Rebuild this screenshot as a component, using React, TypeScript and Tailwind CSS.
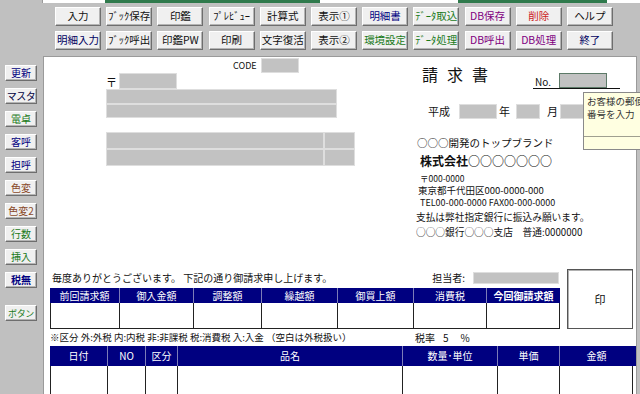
import React from "react";

const FONT = "font-['Noto_Sans_CJK_JP','Noto_Sans',sans-serif]";

type BtnDef = { label: string; color: string };

const topRow1: BtnDef[] = [
  { label: "入力", color: "text-[#111111]" },
  { label: "ﾌﾞｯｸ保存", color: "text-[#111111]" },
  { label: "印鑑", color: "text-[#111111]" },
  { label: "ﾌﾟﾚﾋﾞｭｰ", color: "text-[#111111]" },
  { label: "計算式", color: "text-[#111111]" },
  { label: "表示①", color: "text-[#111111]" },
  { label: "明細書", color: "text-[#000080]" },
  { label: "ﾃﾞｰﾀ取込", color: "text-[#1a7a1a]" },
  { label: "DB保存", color: "text-[#800080]" },
  { label: "削除", color: "text-[#cc2222]" },
  { label: "ヘルプ", color: "text-[#111111]" },
];

const topRow2: BtnDef[] = [
  { label: "明細入力", color: "text-[#000060]" },
  { label: "ﾌﾞｯｸ呼出", color: "text-[#111111]" },
  { label: "印鑑PW", color: "text-[#111111]" },
  { label: "印刷", color: "text-[#111111]" },
  { label: "文字復活", color: "text-[#111111]" },
  { label: "表示②", color: "text-[#111111]" },
  { label: "環境設定", color: "text-[#1a7a1a]" },
  { label: "ﾃﾞｰﾀ処理", color: "text-[#1a7a1a]" },
  { label: "DB呼出", color: "text-[#800080]" },
  { label: "DB処理", color: "text-[#800080]" },
  { label: "終了", color: "text-[#000060]" },
];

const sideBtns: BtnDef[] = [
  { label: "更新", color: "text-[#000080]" },
  { label: "マスタ", color: "text-[#000040] text-[9px] tracking-[-0.5px]" },
  { label: "電卓", color: "text-[#1a7a1a]" },
  { label: "客呼", color: "text-[#000080]" },
  { label: "担呼", color: "text-[#000080]" },
  { label: "色変", color: "text-[#8a4a2a]" },
  { label: "色変2", color: "text-[#8a4a2a]" },
  { label: "行数", color: "text-[#1a7a1a]" },
  { label: "挿入", color: "text-[#1a7a1a]" },
  { label: "税無", color: "text-[#000080] font-bold" },
];

const summaryCols = [
  { label: "前回請求額", w: 69 },
  { label: "御入金額", w: 74 },
  { label: "調整額", w: 68 },
  { label: "繰越額", w: 76 },
  { label: "御買上額", w: 76 },
  { label: "消費税", w: 73 },
  { label: "今回御請求額", w: 74, bold: true },
];

const detailCols = [
  { label: "日付", w: 57 },
  { label: "NO", w: 38 },
  { label: "区分", w: 32 },
  { label: "品名", w: 225 },
  { label: "数量･単位", w: 95 },
  { label: "単価", w: 62 },
  { label: "金額", w: 74 },
];

const Btn = ({ label, color, className = "" }: BtnDef & { className?: string }) => (
  <div
    className={`flex items-center justify-center bg-[#f0f0f0] border border-t-white border-l-white border-r-[#6e6e6e] border-b-[#6e6e6e] shadow-[inset_-1px_-1px_0_#b4b4b4] leading-none whitespace-nowrap ${className} ${color}`}
  >
    {label}
  </div>
);

const Cell = ({ className = "" }: { className?: string }) => (
  <div className={`bg-[#c2c2c2] border border-[#dedede] ${className}`} />
);

export default function App() {
  return (
    <div className={`relative w-[640px] h-[394px] overflow-hidden bg-[#c0c0c0] text-[#111111] ${FONT}`}>
      {/* sheet strip on top */}
      <div className="flex h-[3px]">
        <div className="w-[42px] bg-[#c0c0c0]" />
        <div className="w-[63px] bg-white border-l border-[#9a9a9a]" />
        <div className="w-[215px] bg-[#2f7a4c]" />
        <div className="w-[138px] bg-white" />
        <div className="w-[149px] bg-[#2f7a4c]" />
        <div className="flex-1 bg-white" />
      </div>

      {/* toolbar */}
      <div className="h-[53px] pt-[4px] pl-[55px] flex flex-col gap-[5px]">
        {[topRow1, topRow2].map((row, i) => (
          <div key={i} className="flex gap-[5.2px]">
            {row.map((b) => (
              <Btn key={b.label} {...b} className="w-[46px] h-[19px] text-[10.5px]" />
            ))}
          </div>
        ))}
      </div>

      <div className="flex h-[338px]">
        {/* side buttons */}
        <div className="w-[43px] pt-[9px] pl-[5px] flex flex-col gap-[7px]">
          {sideBtns.map((b) => (
            <Btn key={b.label} {...b} className="w-[32px] h-[16px] text-[10px]" />
          ))}
          <Btn label="ボタン" color="text-[#1a7a1a] text-[9px] tracking-[-0.3px]" className="w-[32px] h-[16px] mt-[10px]" />
        </div>

        {/* sheet */}
        <div className="w-[594px] bg-white border-l border-t border-r border-[#9a9a9a] flex flex-col">
          <div className="h-[212px] flex">
            {/* left column */}
            <div className="ml-[62px] w-[249px] flex flex-col">
              <div className="mt-[1px] h-[15px] flex items-center pl-[127px]">
                <span className="w-[28px] text-[9px] leading-none">CODE</span>
                <Cell className="w-[38px] h-[15px]" />
              </div>
              <div className="h-[16px] flex items-end">
                <span className="w-[13px] text-[11px] leading-[13px]">〒</span>
                <Cell className="w-[58px] h-[16px]" />
              </div>
              <Cell className="w-[231px] h-[15px]" />
              <Cell className="w-[231px] h-[14px]" />
              <div className="mt-[14px] flex">
                <Cell className="w-[218px] h-[17px]" />
                <Cell className="w-[31px] h-[17px]" />
              </div>
              <div className="flex">
                <Cell className="w-[218px] h-[17px]" />
                <Cell className="w-[31px] h-[17px]" />
              </div>
            </div>

            {/* right column */}
            <div className="ml-[61px] w-[220px] flex flex-col">
              <div className="h-[32px] flex items-end">
                <div className="w-[117px] self-start mt-[7px] pl-[6px] text-[16px] leading-[20px] tracking-[9px] whitespace-nowrap">
                  請求書
                </div>
                <div className="w-[87px] h-[16px] border-b border-[#111111] flex items-end">
                  <span className="w-[26px] pl-[2px] text-[10px] leading-[12px]">No.</span>
                  <div className="w-[48px] h-[15px] bg-[#c2c2c2] border border-[#5d7a68]" />
                </div>
              </div>
              <div className="mt-[15px] h-[15px] flex items-center text-[11px] leading-none">
                <span className="w-[43px] pl-[12px]">平成</span>
                <Cell className="w-[38px] h-[15px]" />
                <span className="w-[19px] pl-[2px]">年</span>
                <Cell className="w-[24px] h-[15px]" />
                <span className="w-[20px] pl-[7px]">月</span>
                <Cell className="w-[24px] h-[15px]" />
              </div>
              <div className="mt-[17px] h-[14px] pl-[1px] text-[10.5px] leading-[14px] whitespace-nowrap">
                ○○○開発のトップブランド
              </div>
              <div className="h-[22px] pl-[4px] text-[12px] leading-[22px] font-bold whitespace-nowrap">
                株式会社○○○○○○○
              </div>
              <div className="h-[12px] pl-[4px] text-[8.5px] leading-[12px] whitespace-nowrap">〒000-0000</div>
              <div className="h-[13px] pl-[2px] text-[9.5px] leading-[13px] whitespace-nowrap">
                東京都千代田区000-0000-000
              </div>
              <div className="h-[12px] pl-[4px] text-[9px] leading-[12px] whitespace-nowrap">
                TEL00-000-0000 FAX00-000-0000
              </div>
              <div className="h-[17px] text-[9.7px] leading-[17px] whitespace-nowrap">
                支払は弊社指定銀行に振込み願います。
              </div>
              <div className="h-[13px] text-[9.7px] leading-[13px] whitespace-nowrap">
                ○○○銀行○○○支店　普通:0000000
              </div>
            </div>
          </div>

          {/* summary */}
          <div className="flex pl-[6px]">
            <div className="w-[510px] flex flex-col">
              <div className="h-[19px] flex items-center pb-[2px]">
                <span className="pl-[2px] text-[10px] leading-none whitespace-nowrap">
                  毎度ありがとうございます。 下記の通り御請求申し上げます。
                </span>
                <span className="ml-auto text-[10px] leading-none">担当者:</span>
                <div className="ml-[8px] mr-[1px] w-[86px] h-[12px] bg-[#c2c2c2] border border-[#dedede]" />
              </div>
              <div className="h-[15px] flex bg-[#000080] text-white text-[10px] leading-none">
                {summaryCols.map((c, i) => (
                  <div
                    key={c.label}
                    style={{ width: c.w }}
                    className={`flex items-center justify-center ${i > 0 ? "border-l border-[#7c7cb8]" : ""} ${c.bold ? "font-bold" : ""}`}
                  >
                    {c.label}
                  </div>
                ))}
              </div>
              <div className="h-[26px] flex border-b border-[#222222]">
                {summaryCols.map((c, i) => (
                  <div
                    key={c.label}
                    style={{ width: c.w }}
                    className={`border-l border-[#222222] ${i === summaryCols.length - 1 ? "border-r" : ""}`}
                  />
                ))}
              </div>
            </div>
            <div className="ml-[7px] w-[66px] h-[60px] border border-[#555555] shadow-[inset_1px_1px_0_#b0b0b0] flex items-center justify-center text-[11px]">
              印
            </div>
          </div>

          <div className="h-[17px] flex items-center pl-[6px] text-[9.5px] leading-none whitespace-nowrap">
            <span className="w-[365px]">※区分 外:外税 内:内税 非:非課税 税:消費税 入:入金 （空白は外税扱い）</span>
            <span className="text-[10px]">税率</span>
            <span className="ml-[8px] text-[10px]">5</span>
            <span className="ml-[12px] text-[10px]">%</span>
          </div>

          {/* detail table */}
          <div className="ml-[6px] flex flex-col flex-1">
            <div className="h-[20px] flex bg-[#000080] text-white text-[10px] leading-none">
              {detailCols.map((c, i) => (
                <div
                  key={c.label}
                  style={{ width: c.w }}
                  className={`flex items-center justify-center ${i > 0 ? "border-l border-[#7c7cb8]" : ""}`}
                >
                  {c.label}
                </div>
              ))}
            </div>
            <div className="flex flex-1">
              {detailCols.map((c, i) => (
                <div
                  key={c.label}
                  style={{ width: c.w }}
                  className={`border-l border-[#222222] ${i === detailCols.length - 1 ? "border-r" : ""}`}
                />
              ))}
            </div>
          </div>
        </div>
      </div>

      {/* comment tooltip */}
      <div className="absolute left-[583px] top-[92px] w-[80px] h-[58px] bg-[#ffffe1] border border-[#8a8a8a] flex flex-col">
        <div className="h-[43px] pl-[3px] pt-[2px] text-[9.5px] leading-[13px] text-[#333333] whitespace-nowrap">
          <div>お客様の郵便</div>
          <div>番号を入力</div>
        </div>
        <div className="border-t border-[#a0a090]" />
      </div>
    </div>
  );
}
